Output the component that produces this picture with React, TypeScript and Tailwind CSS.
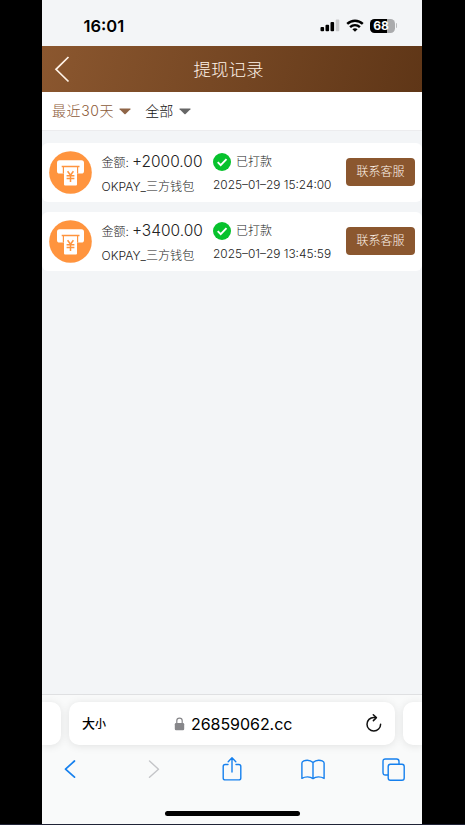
interface WithdrawRecord {
  id: number
  amount: string
  channel: string
  status: string
  time: string
}

const records: WithdrawRecord[] = [
  { id: 1, amount: '+2000.00', channel: 'OKPAY_三方钱包', status: '已打款', time: '2025–01–29 15:24:00' },
  { id: 2, amount: '+3400.00', channel: 'OKPAY_三方钱包', status: '已打款', time: '2025–01–29 13:45:59' },
]

function StatusBar() {
  return (
    <div className="flex h-[46px] shrink-0 items-center justify-between pt-[5px] pr-[25px] pl-[41.5px]">
      <span className="text-[16.5px] leading-5 font-semibold text-black">16:01</span>
      <div className="flex items-center">
        <svg width="20" height="13" viewBox="0 0 20 13">
          <rect x="0.5" y="8" width="3.6" height="4.3" rx="1" />
          <rect x="5.5" y="5.8" width="3.6" height="6.5" rx="1" />
          <rect x="10.5" y="3" width="3.6" height="9.3" rx="1" />
          <rect x="15.7" y="0.5" width="3.6" height="11.8" rx="1" fill="#c9cacc" />
        </svg>
        <svg className="ml-[6px]" width="18" height="13" viewBox="0 0 18 13" fill="none" stroke="#000" strokeWidth="2.4">
          <path d="M1.2 4.9C5.6.6 12.4.6 16.8 4.9" />
          <path d="M4.1 8.1c2.8-2.7 7-2.7 9.8 0" />
          <path d="M9 12.8 6.4 10.3c1.5-1.4 3.7-1.4 5.2 0Z" fill="#000" stroke="none" />
        </svg>
        <div className="ml-[6px] flex items-center gap-px">
          <div className="flex h-[14px] w-[25px] items-center justify-center rounded-[4.5px] bg-linear-to-r from-black from-68% to-[#aaabad] to-68% pr-[2px] text-[12px] leading-none font-bold text-white">
            68
          </div>
          <div className="h-[5px] w-[1.5px] rounded-r-full bg-[#b9babc]" />
        </div>
      </div>
    </div>
  )
}

function Caret({ className }: { className: string }) {
  return (
    <svg className={className} width="12" height="7" viewBox="0 0 12 7" fill="currentColor">
      <path d="M.8.5h10.4q.6.2.2.7L6.6 6.1q-.6.5-1.2 0L.6 1.2Q.2.7.8.5Z" />
    </svg>
  )
}

function AtmIcon() {
  return (
    <svg className="shrink-0" width="43" height="43" viewBox="0 0 43 43">
      <circle cx="21.5" cy="21.5" r="21.3" fill="#ff943e" />
      <rect x="8" y="9.2" width="27" height="13.3" rx="2.6" fill="#fff" />
      <path d="M12.7 14.8h17.8v1.4h-1.3v6.3H13.8v-6.3h-1.1Z" fill="#ff943e" />
      <path d="M15 16.2h13v17.2q0 1.1-1.1 1.1H16.1q-1.1 0-1.1-1.1Z" fill="#fff" />
      <path d="m18.6 20.2 2.9 4 2.9-4M17.6 24.7h7.8M17.6 27.6h7.8M21.5 24.4v6.6" fill="none" stroke="#ff943e" strokeWidth="1.5" />
    </svg>
  )
}

function RecordCard({ record }: { record: WithdrawRecord }) {
  return (
    <div className="flex h-[59.5px] items-center rounded-md bg-white px-[7px]">
      <AtmIcon />
      <div className="ml-[9.5px] w-[111.5px] shrink-0 pt-[5px] font-light whitespace-nowrap text-[#222]">
        <div className="flex h-6 items-center">
          <span className="pt-px text-[12px]">金额:</span>
          <span className="ml-[3px] pb-px text-[15.5px]">{record.amount}</span>
        </div>
        <div className="flex h-[25px] items-center text-[12.1px]">{record.channel}</div>
      </div>
      <div className="shrink-0 pt-[2px] font-light whitespace-nowrap text-[#222]">
        <div className="flex h-[22px] items-center text-[12px]">
          <svg className="mr-[5px]" width="18" height="18" viewBox="0 0 18 18">
            <circle cx="9" cy="9" r="9" fill="#07c22d" />
            <path d="m4.7 9.2 3 3 5.8-6" fill="none" stroke="#fff" strokeWidth="1.9" />
          </svg>
          {record.status}
        </div>
        <div className="flex h-[23px] items-center pt-px text-[11.9px]">{record.time}</div>
      </div>
      <button className="ml-auto h-[28px] w-[69px] shrink-0 rounded-[4px] bg-[#8b572f] text-[12px] font-light text-[#fff5ec]">联系客服</button>
    </div>
  )
}

function BrowserBar() {
  return (
    <div className="mt-auto h-[130px] shrink-0 border-t border-[#dfe0e2] bg-[#f9fafa]">
      <div className="flex h-[50px] justify-between pt-[7px]">
        <div className="h-[43px] w-[19px] rounded-r-[10px] bg-white shadow-[0_1px_8px_rgba(0,0,0,0.1)]" />
        <div className="flex h-[43px] w-[326px] items-center rounded-[10px] bg-white px-[13px] text-black shadow-[0_1px_8px_rgba(0,0,0,0.1)]">
          <span className="w-[92px] text-[13px] font-medium">
            大<span className="text-[11px]">小</span>
          </span>
          <svg width="11" height="14" viewBox="0 0 11 14">
            <rect x="0.8" y="6" width="9.4" height="7.3" rx="1.3" fill="#87878a" />
            <path d="M2.8 6.2V3.8a2.7 2.7 0 0 1 5.4 0v2.4" fill="none" stroke="#87878a" strokeWidth="1.2" />
          </svg>
          <span className="ml-[6px] text-[16px] tracking-[-0.05px]">26859062.cc</span>
          <svg className="ml-auto" width="17" height="19" viewBox="0 0 17 19" fill="none" stroke="#111" strokeWidth="1.5" strokeLinecap="round" strokeLinejoin="round">
            <path d="M10.5 3.4H8.8a6.8 6.8 0 1 0 6.8 6.8" />
            <path d="m8.3.8 3.1 2.8-3 3" />
          </svg>
        </div>
        <div className="h-[43px] w-[19px] rounded-l-[10px] bg-white shadow-[0_1px_8px_rgba(0,0,0,0.1)]" />
      </div>
      <div className="flex h-[48px] items-center justify-between pr-[17px] pl-[22px] text-[#1680ee]">
        <svg width="12" height="20" viewBox="0 0 12 20" fill="none" stroke="currentColor" strokeWidth="1.7" strokeLinecap="round" strokeLinejoin="round">
          <path d="M10.5 2 1.5 10.2l9 8" />
        </svg>
        <svg className="ml-[14px] text-[#c4c5c8]" width="12" height="20" viewBox="0 0 12 20" fill="none" stroke="currentColor" strokeWidth="1.4" strokeLinecap="round" strokeLinejoin="round">
          <path d="m1.5 2 9 8.2-9 8" />
        </svg>
        <svg className="ml-[4px]" width="22" height="26" viewBox="0 0 22 26" fill="none" stroke="currentColor" strokeWidth="1.4" strokeLinecap="round" strokeLinejoin="round">
          <path d="M7 8.5H4.2Q2.2 8.5 2.2 10.5v11.4q0 2 2 2h13.6q2 0 2-2V10.5q0-2-2-2H15" />
          <path d="M11 16V2M7.2 5.7 11 1.8l3.8 3.9" />
        </svg>
        <svg width="24" height="21" viewBox="0 0 24 21" fill="none" stroke="currentColor" strokeWidth="1.4" strokeLinecap="round" strokeLinejoin="round">
          <path d="M12 3.6C10.4 2 8.5 1.2 6.3 1.2 4.1 1.2.9 2.2.9 4v15.4c3.2-2 8.2-2.2 11.1.2 2.9-2.4 7.9-2.2 11.1-.2V4c0-1.8-3.2-2.8-5.4-2.8-2.2 0-4.1.8-5.7 2.4v15.8" />
        </svg>
        <svg width="23" height="23" viewBox="0 0 23 23" fill="none" stroke="currentColor" strokeWidth="1.4" strokeLinejoin="round">
          <rect x="6.2" y="6.2" width="16" height="16" rx="2.2" />
          <path d="M6.2 17H3.4Q1 17 1 14.6V3.4Q1 1 3.4 1h11.2Q17 1 17 3.4v2.8" />
        </svg>
      </div>
      <div className="mx-auto mt-[17.5px] h-[5px] w-[135px] rounded-full bg-black" />
    </div>
  )
}

export default function App() {
  return (
    <div className="h-[825px] w-[465px] overflow-hidden border-b border-[#202336] bg-black font-['Inter','Noto_Sans_CJK_SC',sans-serif]">
      <div className="ml-[42px] flex h-[824px] w-[380px] flex-col overflow-hidden bg-[#f3f5f7]">
        <StatusBar />
        <header className="flex h-[45.5px] shrink-0 items-center bg-linear-[105deg] from-[#8b572f] to-[#5f3617] pl-[12px] text-[#fff3e8]">
          <svg width="18" height="28" viewBox="0 0 18 28" fill="none" stroke="currentColor" strokeWidth="1.7">
            <path d="M14.5 2 2 14.3l12.5 12.2" />
          </svg>
          <h1 className="ml-[121.5px] pt-[2px] text-[17.5px] leading-6 font-light">提现记录</h1>
        </header>
        <div className="flex h-[39.5px] shrink-0 items-center border-b border-[#ececee] bg-white pl-[10px] text-[14px] font-light">
          <span className="tracking-[0.6px] text-[#8c5a38]">最近30天</span>
          <Caret className="mt-[2px] ml-[5px] text-[#8f6547]" />
          <span className="ml-[14px] text-[#111]">全部</span>
          <Caret className="mt-[2px] ml-[6px] text-[#666]" />
        </div>
        <main className="flex flex-col gap-[9.5px] pt-[11.5px]">
          {records.map((record) => (
            <RecordCard key={record.id} record={record} />
          ))}
        </main>
        <BrowserBar />
      </div>
    </div>
  )
}
